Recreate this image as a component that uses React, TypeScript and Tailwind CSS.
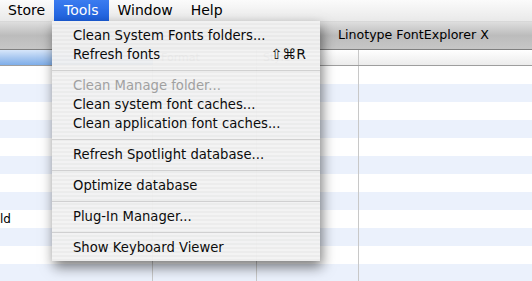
import React from 'react'

const font = { fontFamily: '"DejaVu Sans", "Noto Sans", sans-serif' }

type Entry = { label?: string; shortcut?: string; disabled?: boolean; sep?: boolean }

const toolsMenu: Entry[] = [
  { label: 'Clean System Fonts folders...' },
  { label: 'Refresh fonts', shortcut: '⇧⌘R' },
  { sep: true },
  { label: 'Clean Manage folder...', disabled: true },
  { label: 'Clean system font caches...' },
  { label: 'Clean application font caches...' },
  { sep: true },
  { label: 'Refresh Spotlight database...' },
  { sep: true },
  { label: 'Optimize database' },
  { sep: true },
  { label: 'Plug-In Manager...' },
  { sep: true },
  { label: 'Show Keyboard Viewer' },
]

const rows = Array.from({ length: 12 }, (_, i) => i)

function MenuBar() {
  return (
    <div className="h-[21px] flex items-stretch bg-gradient-to-b from-[#fbfbfb] to-[#e9e9e9] text-[14px] text-black">
      <div className="pl-[8px] pr-[9px] flex items-center">Store</div>
      <div className="px-[10px] flex items-center text-white bg-gradient-to-b from-[#3b7cf0] to-[#1c5fdc]">Tools</div>
      <div className="px-[9px] flex items-center">Window</div>
      <div className="px-[9px] flex items-center">Help</div>
    </div>
  )
}

function ToolsMenu() {
  return (
    <div className="absolute left-[52px] top-[21px] w-[268px] pt-[5px] pb-[4px] bg-[repeating-linear-gradient(180deg,#f3f3f3_0px,#f3f3f3_2px,#ececec_2px,#ececec_4px)] opacity-95 shadow-[2px_6px_12px_rgba(0,0,0,0.55)] text-[13.2px]">
      {toolsMenu.map((e, i) =>
        e.sep ? (
          <div key={i} className="h-[12px] flex items-center">
            <div className="w-full h-px bg-[#cfcfcf]" />
          </div>
        ) : (
          <div key={i} className={`h-[19px] flex items-center pl-[21px] pr-[14px] ${e.disabled ? 'text-[#9c9c9c]' : 'text-black'}`}>
            <span className="flex-1 whitespace-nowrap">{e.label}</span>
            {e.shortcut && <span className="text-[14px]">{e.shortcut}</span>}
          </div>
        )
      )}
    </div>
  )
}

export default function App() {
  return (
    <div className="relative w-[532px] h-[281px] overflow-hidden bg-white" style={font}>
      <MenuBar />
      <div className="h-px bg-[#d8d8d8]" />
      {/* window title bar */}
      <div className="h-[28px] flex items-center bg-gradient-to-b from-[#dedede] via-[#bcbcbc] to-[#c6c6c6] border-b border-[#7f7f7f]">
        <div className="ml-[338px] text-[12.6px] text-black">Linotype FontExplorer X</div>
      </div>
      {/* column headers */}
      <div className="h-[16px] flex text-[11px] text-[#777] border-b border-[#9e9e9e]">
        <div className="w-[153px] bg-gradient-to-b from-[#d7e6fa] via-[#a9c8f0] to-[#7eaee9] border-r border-[#8aa9d6]" />
        <div className="w-[104px] pl-[8px] bg-gradient-to-b from-white to-[#ececec] border-r border-[#c8c8c8]">Format</div>
        <div className="w-[102px] pl-[6px] bg-gradient-to-b from-white to-[#ececec] border-r border-[#c8c8c8]">Style</div>
        <div className="flex-1 bg-gradient-to-b from-white to-[#ececec]" />
      </div>
      {/* table rows */}
      <div>
        {rows.map((r) => (
          <div key={r} className={`h-[18px] flex text-[12px] ${r % 2 === 0 ? 'bg-white' : 'bg-[#ebf1fc]'}`}>
            <div className="w-[153px] border-r border-[#c8c8c8] leading-[18px]">{r === 8 ? 'ld' : ''}</div>
            <div className="w-[104px] border-r border-[#c8c8c8]" />
            <div className="w-[102px] border-r border-[#c8c8c8]" />
            <div className="flex-1" />
          </div>
        ))}
      </div>
      <ToolsMenu />
    </div>
  )
}
